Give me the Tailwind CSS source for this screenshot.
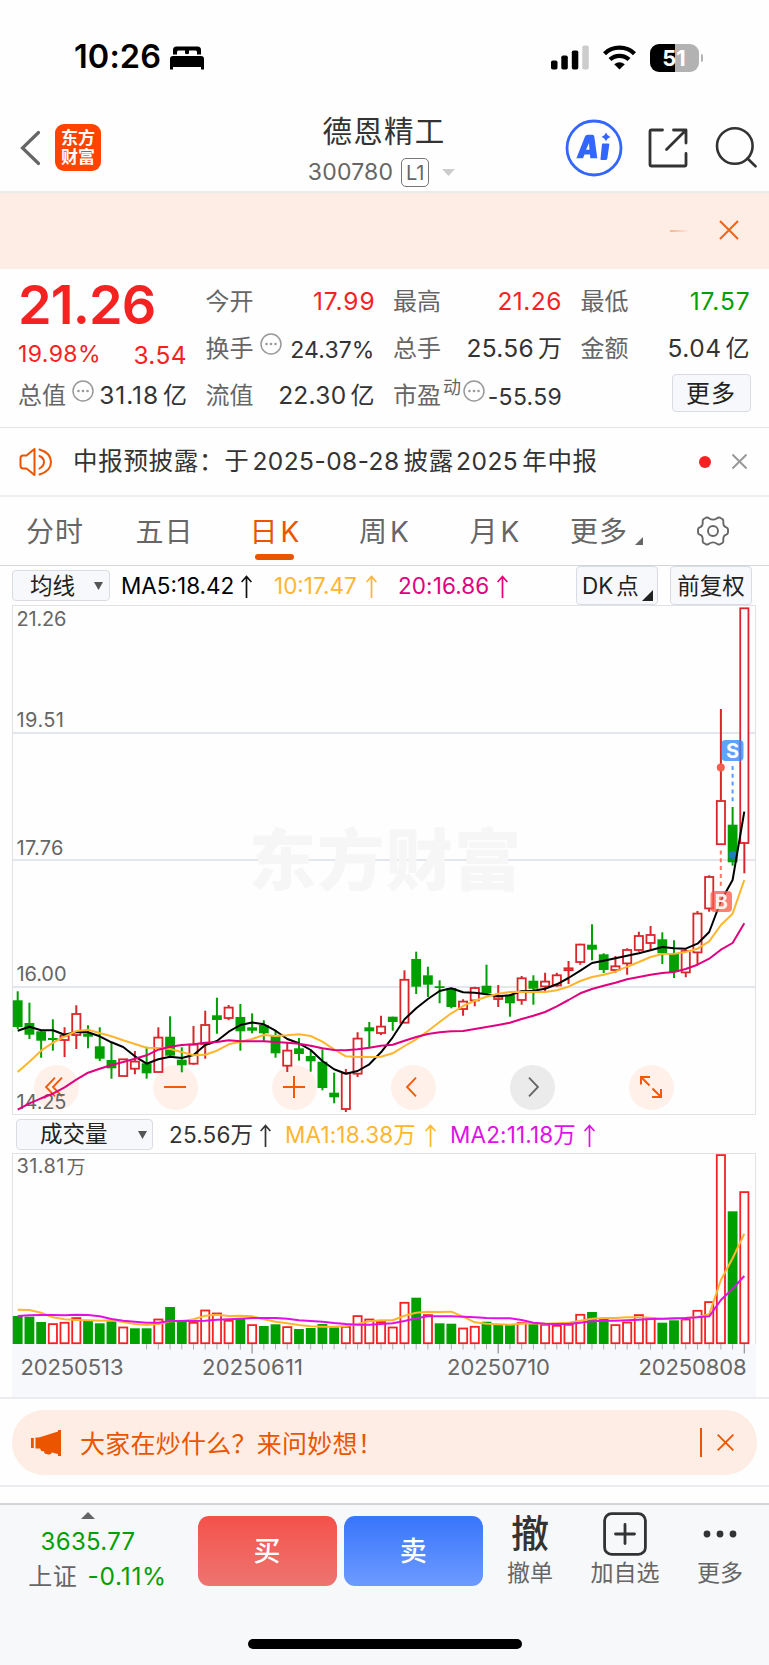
<!DOCTYPE html>
<html lang="zh-CN">
<head>
<meta charset="utf-8">
<title>德恩精工 300780</title>
<script src="https://cdn.jsdelivr.net/npm/@tailwindcss/browser@4"></script>
</head>
<body class="w-[769px] h-[1665px] overflow-hidden bg-[#fefefe] text-[#333] font-[Inter,'Noto_Sans_CJK_SC',sans-serif] leading-none whitespace-nowrap">

<!-- status bar -->
<div class="h-[98px] flex items-start justify-between pl-[74px] pr-[66px] pt-[41px] text-black">
  <div class="flex items-center gap-[9px] h-[33px]">
    <span class="text-[32.500px] font-semibold tracking-[0.1px]">10:26</span>
    <svg class="w-[34px] h-[24px]" viewBox="0 0 34 24"><path d="M3 8.500V4Q3 .5 6.500 .5H27.500Q31 .5 31 4V8.500H27V6Q27 4.500 25.500 4.500H19V7.500Q17 9 15 7.500V4.500H8.500Q7 4.500 7 6V8.500Z"/><path d="M0 13Q0 10 3 10H31Q34 10 34 13V23.500H31V21H3V23.500H0Z"/></svg>
  </div>
  <div class="flex items-center h-[33px]">
    <svg class="w-[38px] h-[25px]" viewBox="0 0 38 25"><rect x="0" y="15.500" width="6.500" height="9" rx="1.800"/><rect x="10.300" y="10.500" width="6.500" height="14" rx="1.800"/><rect x="20.800" y="5.500" width="6.500" height="19" rx="1.800"/><rect x="31.300" y=".5" width="6.500" height="24" rx="1.800" fill="#ccc"/></svg>
    <svg class="ml-[14px] w-[33px] h-[25px]" viewBox="0 0 33 25" fill="none" stroke="#000" stroke-width="4.300"><path d="M1.500 8.700Q7.500 2.700 16.500 2.700T31.500 8.700"/><path d="M7 14.500Q11 10.800 16.500 10.800T26 14.500"/><path d="M16.500 24.500L11.200 19.300Q16.500 15.300 21.800 19.300Z" fill="#000" stroke="none"/></svg>
    <div class="ml-[14px] w-[49px] h-[28px] rounded-[9px] bg-[linear-gradient(90deg,#000_52%,#b2b2b2_52%)] text-white text-[22px] font-bold flex items-center justify-center">51</div>
    <div class="ml-[2px] w-[2.5px] h-[8px] rounded-r-full bg-[#b2b2b2]"></div>
  </div>
</div>

<!-- title bar -->
<div class="h-[95px] border-b-2 border-[#ebebeb] grid grid-cols-[1fr_auto_1fr]">
  <div class="flex items-start pl-[20px]">
    <svg class="w-[20px] h-[36px] mt-[32px]" viewBox="0 0 20 36" fill="none" stroke="#666" stroke-width="3.200" stroke-linecap="round"><path d="M18.500 2.500L2.500 18L18.500 33.500"/></svg>
    <div class="ml-[15px] mt-[26px] w-[46px] h-[47px] rounded-[9px] bg-[#ff4400] text-white font-bold text-[17px] leading-[19px] pt-[5px] text-center"><div>东方</div><div>财富</div></div>
  </div>
  <div class="flex flex-col items-center">
    <div class="mt-[18px] text-[29.500px] leading-[30px] tracking-[1.300px] -ml-[1px]">德恩精工</div>
    <div class="mt-[12px] flex items-center text-[#666] text-[23px] h-[29px] pr-[6px]">
      <span class="tracking-[0.2px]">300780</span>
      <span class="ml-[8px] w-[28px] h-[29px] rounded-[5px] border border-[#777] text-[20px] flex items-center justify-center">L1</span>
      <svg class="ml-[13px] w-[13px] h-[7px]" viewBox="0 0 13 7" fill="#ccc"><path d="M0 0H13L6.500 7Z"/></svg>
    </div>
  </div>
  <div class="flex items-start justify-end pr-[12px]">
    <svg class="mt-[21px] w-[58px] h-[58px]" viewBox="0 0 58 58" fill="#3366ff"><circle cx="29" cy="29" r="27" fill="none" stroke="#3366ff" stroke-width="2.800"/><path fill-rule="evenodd" d="M11.500 39L20 17.500Q20.800 15.800 22.500 15.800H27.500Q29 15.800 29.300 17.500L32.300 39.200H25.300L25 35.500H19.500L18 39.200H12Q11 40 11.500 39ZM21 30.800H24.500L24 24Z"/><path d="M37.500 24.500H43.500Q44.500 24.700 44.300 25.700L42.300 39.500Q42 41 40.500 41H36.300Q35.300 41 35.500 39.700L37 25Z"/><path d="M41 13.500Q42 16.800 45.500 18Q42 19 41 22.500Q40 19 36.500 18Q40 16.800 41 13.500Z"/></svg>
    <svg class="ml-[24px] mt-[29px] w-[41px] h-[42px]" viewBox="0 0 41 42" fill="none" stroke="#333" stroke-width="2.800" stroke-linecap="round" stroke-linejoin="round"><path d="M15.500 3H4.500Q3 3 3 4.500V37.500Q3 39 4.500 39H37.500Q39 39 39 37.500V26.500"/><path d="M26.500 3H39V16M39 3L19.500 22.500"/></svg>
    <svg class="ml-[26px] mt-[28px] w-[43px] h-[42px]" viewBox="0 0 43 42" fill="none" stroke="#333" stroke-width="2.600" stroke-linecap="round"><circle cx="20.800" cy="20" r="17.800"/><path d="M33.500 32.500L41.500 40.300"/></svg>
  </div>
</div>

<!-- empty promotion strip -->
<div class="h-[76px] bg-[#fdede4] flex items-center justify-end pr-[30px]">
  <div class="w-[20px] h-[2px] bg-gradient-to-r from-[#f8b48f] to-[#fdede4]"></div>
  <svg class="ml-[29px] w-[20px] h-[20px] -mt-[2px]" viewBox="0 0 20 20" stroke="#f2631a" stroke-width="2"><path d="M1 1L19 19M19 1L1 19"/></svg>
</div>

<!-- quote -->
<div class="h-[159px] border-b border-[#e4e4e4] pt-[9px] pl-[18px] flex gap-[18.500px] text-[24.500px]">
  <div class="w-[169px] h-[141px] flex flex-col">
    <div class="h-[54px] text-[54px] leading-[54px] font-semibold text-[#f52222] tracking-[-0.9px]">21.26</div>
    <div class="h-[40px] pt-[5px] flex items-center justify-between text-[#f52222]"><span class="text-[23px] tracking-[0.400px]">19.98%</span><span class="pt-[2px] tracking-[0.400px]">3.54</span></div>
    <div class="h-[47px] flex items-center"><span class="text-[#666] text-[24px]">总值</span><svg class="ml-[6px] -mt-[10px] w-[22px] h-[22px]" viewBox="0 0 22 22" fill="#999"><circle cx="11" cy="11" r="10" fill="none" stroke="#999" stroke-width="1.500"/><circle cx="6.500" cy="11" r="1.300"/><circle cx="11" cy="11" r="1.300"/><circle cx="15.500" cy="11" r="1.300"/></svg><span class="ml-auto"><span class="tracking-[0.900px]">31.18</span><span class="ml-[4px] text-[24px]">亿</span></span></div>
  </div>
  <div class="w-[169px] h-[141px] grid grid-rows-3">
    <div class="flex items-center justify-between"><span class="text-[#666] text-[24px]">今开</span><span class="text-[#f52222] tracking-[0.900px] -mr-[1px]">17.99</span></div>
    <div class="flex items-center"><span class="text-[#666] text-[24px]">换手</span><svg class="ml-[6px] -mt-[10px] w-[22px] h-[22px]" viewBox="0 0 22 22" fill="#999"><circle cx="11" cy="11" r="10" fill="none" stroke="#999" stroke-width="1.500"/><circle cx="6.500" cy="11" r="1.300"/><circle cx="11" cy="11" r="1.300"/><circle cx="15.500" cy="11" r="1.300"/></svg><span class="ml-auto pt-[3px] text-[23px] tracking-[0.100px]">24.37%</span></div>
    <div class="flex items-center justify-between"><span class="text-[#666] text-[24px]">流值</span><span><span class="tracking-[0.300px]">22.30</span><span class="ml-[4px] text-[24px]">亿</span></span></div>
  </div>
  <div class="w-[169px] h-[141px] grid grid-rows-3">
    <div class="flex items-center justify-between"><span class="text-[#666] text-[24px]">最高</span><span class="text-[#f52222] tracking-[0.500px]">21.26</span></div>
    <div class="flex items-center justify-between"><span class="text-[#666] text-[24px]">总手</span><span><span class="tracking-[0.300px]">25.56</span><span class="ml-[4px] text-[24px]">万</span></span></div>
    <div class="flex items-center"><span class="text-[#666] text-[24px]">市盈</span><span class="ml-[2px] -mt-[15px] text-[18px] text-[#666]">动</span><svg class="ml-[2px] -mt-[10px] w-[22px] h-[22px]" viewBox="0 0 22 22" fill="#999"><circle cx="11" cy="11" r="10" fill="none" stroke="#999" stroke-width="1.500"/><circle cx="6.500" cy="11" r="1.300"/><circle cx="11" cy="11" r="1.300"/><circle cx="15.500" cy="11" r="1.300"/></svg><span class="ml-auto pt-[3px] text-[23px] tracking-[0.300px]">-55.59</span></div>
  </div>
  <div class="w-[169px] h-[141px] grid grid-rows-3">
    <div class="flex items-center justify-between"><span class="text-[#666] text-[24px]">最低</span><span class="text-[#00a000] tracking-[0.900px] -mr-[1px]">17.57</span></div>
    <div class="flex items-center justify-between"><span class="text-[#666] text-[24px]">金额</span><span><span class="tracking-[0.500px]">5.04</span><span class="ml-[4px] text-[24px]">亿</span></span></div>
    <div class="flex items-center justify-end"><span class="-mr-[1px] -mt-[5px] w-[79px] h-[38px] rounded-[4px] border border-[#d9dce3] bg-[#f7f8fb] text-[#222] text-[24px] flex items-center justify-center tracking-[1px] pt-[1px]">更多</span></div>
  </div>
</div>

<!-- notice -->
<div class="h-[69px] border-b-2 border-[#efefef] flex items-center pl-[19px] pr-[22px] text-[24.500px]">
  <svg class="w-[34px] h-[30px]" viewBox="0 0 34 30" fill="none" stroke="#eb5500" stroke-width="2" stroke-linejoin="round" stroke-linecap="round"><path d="M15.500 2V28L7.500 21.500H4Q1.500 21.500 1.500 18.500V11.500Q1.500 8.500 4 8.500H7.500Z"/><path d="M20.500 9Q25 11 25 15T20.500 21.500M20.500 2.500Q32 6 32 15T20.500 27.500"/></svg>
  <span class="ml-[20px] tracking-[0.700px]">中报预披露：于</span><span class="ml-[3px] tracking-[0.450px]">2025-08-28</span><span class="ml-[4px] tracking-[0.700px]">披露</span><span class="ml-[2px] tracking-[0.500px]">2025</span><span class="ml-[4px] tracking-[0.700px]">年中报</span>
  <span class="ml-auto w-[12px] h-[12px] rounded-full bg-[#f52222]"></span>
  <svg class="ml-[21px] w-[15px] h-[15px]" viewBox="0 0 15 15" stroke="#999" stroke-width="2"><path d="M.5 .5L14.500 14.500M14.500 .5L.5 14.500"/></svg>
</div>

<!-- period tabs -->
<div class="h-[69px] border-b border-[#d3d5df] flex text-[28px] text-[#666]">
  <div class="w-[110px] flex justify-center pt-[21px] tracking-[1px]">分时</div>
  <div class="w-[110px] flex justify-center pt-[21px] tracking-[1px] pr-[1px]">五日</div>
  <div class="w-[110px] flex flex-col items-center pt-[21px] pr-[1px] text-[#eb5500]"><span>日<span class="ml-[3px]">K</span></span><span class="mt-[8px] w-[39px] h-[6px] rounded-full bg-[#eb5500]"></span></div>
  <div class="w-[110px] flex justify-center pt-[21px] pr-[2px]"><span>周<span class="ml-[3px]">K</span></span></div>
  <div class="w-[110px] flex justify-center pt-[21px] pr-[1px]"><span>月<span class="ml-[3px]">K</span></span></div>
  <div class="w-[110px] flex justify-center pt-[21px] tracking-[1px] pl-[3px]">更多<svg class="ml-[7px] mt-[19px] w-[8px] h-[8px]" viewBox="0 0 8 8" fill="#666"><path d="M8 0V8H0Z"/></svg></div>
  <div class="w-[106px] flex justify-center pt-[18px]"><svg class="w-[32px] h-[32px]" viewBox="0 0 32 32" fill="none" stroke="#666" stroke-width="1.900" stroke-linejoin="round"><circle cx="16" cy="16" r="5"/><path d="M9 2.700Q10.500 2 12 3.300Q16 6 20 3.300Q21.500 2 23 2.700L25.700 4.300Q26.500 5 26.300 7Q26 11.500 29.300 12.300Q30.800 12.900 31 14.300V17.700Q30.800 19.100 29.300 19.700Q26 20.500 26.300 25Q26.500 27 25.700 27.700L23 29.300Q21.500 30 20 28.700Q16 26 12 28.700Q10.500 30 9 29.300L6.300 27.700Q5.500 27 5.700 25Q6 20.500 2.700 19.700Q1.200 19.100 1 17.700V14.300Q1.200 12.900 2.700 12.300Q6 11.500 5.700 7Q5.500 5 6.300 4.300Z"/></svg></div>
</div>

<!-- moving average row -->
<div class="h-[39px] flex items-center pl-[12px] pr-[17px] text-[22.500px] text-black">
  <div class="w-[98px] h-[31px] rounded-[4px] border border-[#d9dce3] bg-[#f7f8fb] text-[#222] flex items-center pl-[17px] pt-[1px]">均线<svg class="ml-[19px] w-[9px] h-[8px]" viewBox="0 0 9 8" fill="#555"><path d="M0 0H9L4.500 8Z"/></svg></div>
  <div class="ml-[11px] w-[153px] flex items-center justify-between pr-[22px] pt-[1px]"><span>MA5:18.42</span><svg class="w-[11px] h-[23px]" viewBox="0 0 11 23" fill="none" stroke="#111" stroke-width="1.700"><path d="M5.500 23V1.500M.6 7L5.500 1.500L10.400 7"/></svg></div>
  <div class="w-[124px] flex items-center justify-between pr-[21px] pt-[1px] text-[#ffb62e]"><span>10:17.47</span><svg class="w-[11px] h-[23px]" viewBox="0 0 11 23" fill="none" stroke="#ffb62e" stroke-width="1.700"><path d="M5.500 23V1.500M.6 7L5.500 1.500L10.400 7"/></svg></div>
  <div class="w-[110px] flex items-center justify-between pt-[1px] text-[#e0007f]"><span class="tracking-[0.100px]">20:16.86</span><svg class="w-[11px] h-[23px]" viewBox="0 0 11 23" fill="none" stroke="#e0007f" stroke-width="1.700"><path d="M5.500 23V1.500M.6 7L5.500 1.500L10.400 7"/></svg></div>
  <div class="ml-auto w-[82px] h-[39px] rounded-[4px] border border-[#d9dce3] bg-[#f7f8fb] text-[#222] flex items-center pl-[5px] pt-[1px] relative">DK<span class="ml-[3px]">点</span><svg class="absolute right-[4px] bottom-[3px] w-[11px] h-[11px]" viewBox="0 0 11 11" fill="#222"><path d="M11 0V11H0Z"/></svg></div>
  <div class="ml-[12px] w-[82px] h-[39px] rounded-[4px] border border-[#d9dce3] bg-[#f7f8fb] text-[#222] flex items-center justify-center pt-[1px]">前复权</div>
</div>

<!-- candlestick chart -->
<div class="relative h-[510px]">
  <div class="absolute left-[33.500px] top-[459.500px] flex gap-[74px]">
    <div class="w-[45px] h-[45px] rounded-full bg-[#fff1ea] flex items-center justify-center"><svg class="-ml-[4px] w-[18px] h-[20px]" viewBox="0 0 18 20" fill="none" stroke="#f25a0a" stroke-width="1.900"><path d="M10 .7L1 10L10 19.300M17 .7L8 10L17 19.300"/></svg></div>
    <div class="w-[45px] h-[45px] rounded-full bg-[#fff1ea] flex items-center justify-center"><svg class="w-[22px] h-[22px]" viewBox="0 0 22 22" stroke="#f25a0a" stroke-width="2"><path d="M0 11H22"/></svg></div>
    <div class="w-[45px] h-[45px] rounded-full bg-[#fff1ea] flex items-center justify-center"><svg class="w-[22px] h-[22px]" viewBox="0 0 22 22" stroke="#f25a0a" stroke-width="2"><path d="M0 11H22M11 0V22"/></svg></div>
    <div class="w-[45px] h-[45px] rounded-full bg-[#fff1ea] flex items-center justify-center"><svg class="-ml-[3px] w-[11px] h-[20px]" viewBox="0 0 11 20" fill="none" stroke="#f25a0a" stroke-width="1.900"><path d="M10 .7L1 10L10 19.300"/></svg></div>
    <div class="w-[45px] h-[45px] rounded-full bg-[#ebebeb] flex items-center justify-center"><svg class="ml-[3px] w-[11px] h-[20px]" viewBox="0 0 11 20" fill="none" stroke="#666" stroke-width="1.900"><path d="M1 .7L10 10L1 19.300"/></svg></div>
    <div class="w-[45px] h-[45px] rounded-full bg-[#fff1ea] flex items-center justify-center"><svg class="w-[22px] h-[22px]" viewBox="0 0 22 22" fill="none" stroke="#f25a0a" stroke-width="2"><path d="M1 8.500V1H10M1 1L9.500 9.500M21 13V21H12M21 21L12.500 12.500"/></svg></div>
  </div>
  <svg id="kline" class="relative block w-[769px] h-[510px]" viewBox="0 605 769 510"></svg>
</div>

<!-- volume indicator row -->
<div class="h-[38px] flex items-center pl-[16px] text-[22.500px]">
  <div class="w-[137px] h-[31px] rounded-[4px] border border-[#d9dce3] bg-[#f7f8fb] text-[#222] flex items-center pl-[23px] pt-[1px]">成交量<svg class="ml-[30px] w-[9px] h-[8px]" viewBox="0 0 9 8" fill="#555"><path d="M0 0H9L4.500 8Z"/></svg></div>
  <div class="ml-[16px] w-[116px] flex items-center justify-between pr-[14px] pt-[2px]"><span class="tracking-[0.200px]">25.56万</span><svg class="w-[11px] h-[23px]" viewBox="0 0 11 23" fill="none" stroke="#333" stroke-width="1.700"><path d="M5.500 23V1.500M.6 7L5.500 1.500L10.400 7"/></svg></div>
  <div class="w-[165px] flex items-center justify-between pr-[14px] pt-[2px] text-[#ffb62e]"><span class="tracking-[0.150px]">MA1:18.38万</span><svg class="w-[11px] h-[23px]" viewBox="0 0 11 23" fill="none" stroke="#ffb62e" stroke-width="1.700"><path d="M5.500 23V1.500M.6 7L5.500 1.500L10.400 7"/></svg></div>
  <div class="w-[145px] flex items-center justify-between pt-[2px] text-[#e010e8]"><span class="tracking-[0.150px]">MA2:11.18万</span><svg class="w-[11px] h-[23px]" viewBox="0 0 11 23" fill="none" stroke="#e010e8" stroke-width="1.700"><path d="M5.500 23V1.500M.6 7L5.500 1.500L10.400 7"/></svg></div>
</div>

<!-- volume chart -->
<svg id="volume" class="block w-[769px] h-[244px]" viewBox="0 1153 769 244"></svg>

<!-- assistant banner -->
<div class="h-[90px] border-t-2 border-b-2 border-[#ececf0] pl-[12px] pr-[12.500px] pt-[11px]">
  <div class="h-[65px] rounded-[32px] bg-[#fdede4] text-[#eb5500] text-[25px] flex items-center pl-[19px] pr-[23px]">
    <svg class="w-[30px] h-[26px]" viewBox="0 0 30 26" fill="#eb5500"><path d="M0 8H2.800V18H0ZM4.500 7.500H8L27 1.500V0H30V26H27V24L21 22.500Q19.500 25.500 16 24Q13 24.500 13 21Q10 22 9 18.500H4.500Z"/></svg>
    <span class="ml-[19px] pt-[3px] tracking-[0.250px]">大家在炒什么？来问妙想！</span>
    <span class="ml-auto w-[1.500px] h-[29px] bg-[#eb5500]"></span>
    <svg class="ml-[15px] w-[17px] h-[17px]" viewBox="0 0 17 17" stroke="#eb5500" stroke-width="1.800"><path d="M.7 .7L16.300 16.300M16.300 .7L.7 16.300"/></svg>
  </div>
</div>
<div class="h-[16px]"></div>

<!-- bottom trading bar -->
<div class="h-[162px] border-t-2 border-[#d2d5d9] bg-[#f7f8fa] flex flex-col justify-between pb-[16px]">
  <div class="flex items-start">
    <div class="w-[176px] flex flex-col items-center">
      <svg class="mt-[7px] w-[14px] h-[7px]" viewBox="0 0 14 7" fill="#666"><path d="M0 7L7 0L14 7Z"/></svg>
      <div class="mt-[11px] text-[24px] tracking-[0.300px] text-[#00a000]">3635.77</div>
      <div class="mt-[10px] pl-[19px] text-[24px] text-[#666] tracking-[0.700px]">上证<span class="ml-[10px] text-[#00a000] text-[24.500px] tracking-[0.700px]">-0.11%</span></div>
    </div>
    <div class="ml-[21.500px] mt-[11px] w-[139px] h-[70px] rounded-[11px] bg-gradient-to-b from-[#f5504a] to-[#ed7470] text-white text-[27px] font-medium flex items-center justify-center">买</div>
    <div class="ml-[7px] mt-[11px] w-[139.500px] h-[70px] rounded-[11px] bg-gradient-to-b from-[#3875fb] to-[#6c9aff] text-white text-[27px] font-medium flex items-center justify-center">卖</div>
    <div class="w-[94px] flex flex-col items-center text-[#666] text-[23px]"><span class="mt-[9px] text-[38px] font-medium text-[#333]">撤</span><span class="mt-[10px]">撤单</span></div>
    <div class="w-[96px] flex flex-col items-center text-[#666] text-[23px]"><svg class="mt-[7px] w-[44px] h-[44px]" viewBox="0 0 44 44" fill="none" stroke="#333" stroke-width="2.800" stroke-linecap="round"><rect x="1.600" y="1.600" width="40.800" height="40.800" rx="7"/><path d="M22 12.500V31.500M12.500 22H31.500"/></svg><span class="mt-[6px]">加自选</span></div>
    <div class="w-[94px] flex flex-col items-center text-[#666] text-[23px]"><svg class="mt-[25px] w-[34px] h-[8px]" viewBox="0 0 34 8" fill="#333"><circle cx="4" cy="4" r="3.400"/><circle cx="17" cy="4" r="3.400"/><circle cx="30" cy="4" r="3.400"/></svg><span class="mt-[24px]">更多</span></div>
  </div>
  <div class="self-center w-[274px] h-[10px] rounded-full bg-black"></div>
</div>

<script>
// one entry per trading day: high, body top, body bottom, low (chart y), then r = up, g = down
const days = `991.3 1000.3 1027 1029 g,1002.7 1023 1034.7 1039 g,1031.3 1031.3 1040.7 1057.7 g,1019.3 1038 1040 1050.7 g,1027.3 1035.3 1040.3 1057 r,1005.3 1013.7 1035.3 1049 r,1025.3 1033.7 1036.7 1048.3 g,1027.3 1046.3 1058.7 1061 g,1042.7 1060 1068.3 1078.7 g,1059 1059 1076.3 1076.3 r,1051 1061.3 1069 1074.3 r,1046.7 1063.3 1073.3 1078.7 g,1027.3 1037.3 1072.3 1072.3 r,1016.3 1036.7 1055.7 1056.3 g,1047.3 1059.7 1065.3 1072.3 g,1026 1044.3 1064 1064.7 r,1010.7 1024.7 1044.3 1058.7 r,997.7 1015.3 1020 1033.7 g,1005 1007.3 1018.3 1020.3 r,1004 1017 1031.3 1050.7 g,1013.3 1027.3 1030.7 1033.3 g,1020.3 1025 1033.3 1041 g,1030 1036 1053.3 1057.7 g,1042.3 1050.3 1066 1072 r,1038 1048.3 1054 1060.7 g,1050.7 1056 1061.3 1071.7 g,1049.3 1061.7 1088 1090.3 g,1072.7 1092.7 1097.3 1103.3 g,1069 1073 1109.3 1112 r,1032.3 1038.3 1074 1077 r,1022 1027.3 1031.3 1047.7 g,1015.7 1026.3 1033.3 1035 r,1016.7 1016.7 1022 1030.7 g,970.3 979.5 1023 1023 r,951.7 959 986.7 994 g,966.7 975.3 984.7 997 g,980.3 986.3 988 1003.3 g,988 988 1007 1008.3 g,999.3 1001.3 1009.3 1015.7 r,986.7 987.7 1000.7 1006.3 r,964.7 985.7 993.3 994 g,985 996.3 999.3 1007 r,994 995 1003.3 1016.7 g,976 978 1000.3 1004.7 r,975.3 980.7 988.7 1004.7 g,972.7 981.3 986.7 991.7 r,972.7 975 985.7 986.7 r,961 968 970.5 984 r,943.7 944.3 962.3 964.7 r,924.3 944.7 949.7 960.3 g,953.3 954.3 970 973 g,956 966 970.3 973 r,948.3 949.7 963.7 974.7 r,931.7 935.7 950.3 951.7 r,926 934.7 943.3 950 r,932.3 939.3 953.3 964 g,940.3 954 972 978 g,949.3 950.7 972.7 977.3 r,911 913.3 952.7 964.7 r,875.3 876.7 908.7 911.7 r,709 800.7 844.5 844.5 r,807 824.7 862.3 865.7 g,608 608 843.3 873.3 r`.split(',').map(s => s.split(' '));
const ma5 = [1030.7,1026.7,1030.3,1030.3,1034.7,1032,1032.3,1036.3,1042.3,1047,1056.3,1063.7,1059.3,1056.7,1058,1055,1045,1041,1031.7,1025,1022.5,1024.3,1030.7,1039,1043.3,1050,1061,1069.3,1073.7,1071,1064.3,1052.3,1037.3,1019.3,1008.3,999,991,988.3,992.3,992.7,994.3,996.3,995.3,991,990.7,988.7,984.3,978,970.7,963,960.7,958.3,955.7,953.3,950.3,947,948.3,948.7,943.7,932,901,880,811.7];
const ma10 = [1072,1061.7,1050.7,1042.7,1036.7,1031,1029.7,1033,1036.3,1040.3,1044,1047.7,1048,1049,1052,1055.3,1054.7,1050.7,1044.3,1041.7,1039,1035,1036,1035.3,1034.3,1036,1041.7,1049.3,1056.3,1057,1057,1056.7,1053.3,1046,1039.3,1031,1022,1013.3,1006,1000.7,996.7,993.7,992,991.7,992,992,990.3,986.7,981,977,974.7,971.7,966.7,962,957,954,953.7,952,948.7,941.3,925,913.7,880];
const ma20 = [1109.7,1103.3,1098.3,1093.7,1087.3,1079.7,1072.7,1068.7,1065,1062,1058.7,1055.3,1049.7,1046.7,1045,1044.3,1042.7,1042,1040.3,1041.3,1041.3,1041.3,1042,1042.7,1043.7,1045.7,1048.3,1050,1050.3,1049.3,1047.7,1045.7,1044.7,1040.7,1037,1034,1032.3,1031.3,1031,1029,1027,1025,1022.8,1019,1015.7,1012,1006.3,1000,993.3,989,985.7,982.7,979.3,977,974.7,973,972,969,964.7,958.7,949.7,943,923.3];
// volume bars: height above the base line, then colour
const vol = '28g 27.3g 22g 20.7r 22r 26.7r 23g 20.7g 22.7g 17.3r 15.7g 15.7g 25.3r 37g 22g 22r 34.3r 31.3r 24r 25.3g 19.7r 18g 19.7g 17.7r 15g 16g 20g 16.7g 18r 28.7r 25.3r 22.7r 17.3r 42r 46.3g 29.7r 20.7g 20.3g 16.3r 18r 22.3g 19g 19g 21.7r 20.7g 20r 19r 20r 30r 32g 25g 19.7r 22.3r 29.7r 26.7r 21.3g 23.7g 25.3r 34r 42.7r 189.7r 132.7g 152.7r'.split(' ');
const vm1 = [599,600,608,622,628,630,631,632,631,636,642,645,642,634,633,628,617,614,618,617,619,628,635,640,645,649,650,650,648,642,634,631,631,617,608,605,606,605,620,637,641,643,644,641,640,641,640,638,632,626,624,624,622,622,623,627,627,624,621,613,510,445,371];
const vm2 = [618,616,615,615,616,614,615,619,627,632,635,638,638,633,633,633,632,629,628,626,624,624,624,626,631,633,635,639,642,644,644,642,640,633,625,619,619,619,620,622,624,625,625,630,638,641,642,642,638,634,632,632,631,629,627,626,625,624,622,619,570,536,498];
const X = i => 17.7 + 11.72 * i;
const line = (a, c, f = y => y) => `<polyline fill="none" stroke="${c}" stroke-width="2" stroke-linejoin="round" points="${a.map((y, i) => X(i).toFixed(1) + ',' + f(y).toFixed(1)).join(' ')}"/>`;
const label = (x, y, t, w, s = 20) => `<text x="${x}" y="${y}" font-size="${s}" fill="#666" textLength="${w}">${t}</text>`;

let k = '<path d="M12.500 1114.500V605.500H755.500V1114.500Z" fill="none" stroke="#e2e2e6"/><path d="M13 733H755M13 860H755M13 987H755" stroke="#e3e6ec" stroke-width="2"/>';
k += '<text x="249" y="885" font-size="67" font-weight="900" fill="#f6f6f6" textLength="272">东方财富</text>';
k += label(16.5, 626, '21.26', 50) + label(16.5, 726.5, '19.51', 47.5) + label(16.5, 854.5, '17.76', 47) + label(16.5, 981, '16.00', 50) + label(16.5, 1108.500, '14.25', 50);
days.forEach(([h, t, b, l, c], i) => {
  h = +h; t = +t; b = +b; l = +l;
  const x = X(i);
  if (c === 'g') k += `<path d="M${x} ${h}V${l}" stroke="#00a000" stroke-width="2"/><rect x="${x - 4.9}" y="${t}" width="9.800" height="${b - t}" fill="#00a000"/>`;
  else k += `<path d="M${x} ${h}V${t}M${x} ${b}V${l}" stroke="#d9262b" stroke-width="2"/><rect x="${x - 4.1}" y="${t + .3}" width="8.200" height="${Math.max(1, b - t - .6)}" fill="#fefefe" stroke="#d9262b" stroke-width="1.800"/>`;
});
k += `<circle cx="720.800" cy="767.500" r="4" fill="#f5604c"/><circle cx="732.600" cy="855" r="4" fill="#1f7fb8"/>
<path d="M732.600 766V802" stroke="#559cff" stroke-width="2" stroke-dasharray="4 3.800"/><path d="M720.800 850.500V888" stroke="#ff7766" stroke-width="2" stroke-dasharray="4 3.800"/>`;
k += line(ma5, '#000') + line(ma10, '#ffb62e') + line(ma20, '#e0007f');
k += `<rect x="721.500" y="740" width="22" height="21" rx="4" fill="#3388ff" fill-opacity=".78"/><text x="732.500" y="758" font-size="20" font-weight="700" text-anchor="middle" fill="#fff">S</text>
<rect x="710.500" y="891" width="21.500" height="21" rx="4" fill="#ff5544" fill-opacity=".75"/><text x="721.300" y="909" font-size="20" font-weight="700" text-anchor="middle" fill="#fff" fill-opacity=".9">B</text>`;
document.getElementById('kline').innerHTML = k;

let v = '<rect x="12" y="1344" width="744" height="53" fill="#f7f8fb"/><path d="M12.500 1344V1153.500H755.500V1344" fill="none" stroke="#e2e2e6"/>' + label(16.5, 1173, '31.81', 48) + label(66.500, 1173.500, '万', 19, 19);
vol.forEach((s, i) => {
  const h = parseFloat(s), x = X(i);
  v += s.endsWith('g') ? `<rect x="${x - 4.9}" y="${1344 - h}" width="9.800" height="${h}" fill="#00a000"/>` : `<rect x="${x - 4.1}" y="${1344.8 - h}" width="8.200" height="${h - 1.6}" fill="#fefefe" stroke="#f52222" stroke-width="1.800"/>`;
  if (i > 10) v += `<path d="M${x} 1344v${i % 21 === 20 ? 9.5 : 5.5}" stroke="#999" stroke-width="${i % 21 === 20 ? 1.3 : .8}"/>`;
});
v += line(vm1, '#ffb62e', y => 1110 + y / 3) + line(vm2, '#e010e8', y => 1110 + y / 3);
v += label(20.5, 1374.500, '20250513', 103, 22) + label(202, 1374.500, '20250611', 101, 22) + label(447, 1374.500, '20250710', 103, 22) + label(638.5, 1374.500, '20250808', 108, 22);
document.getElementById('volume').innerHTML = v;
</script>
</body>
</html>
